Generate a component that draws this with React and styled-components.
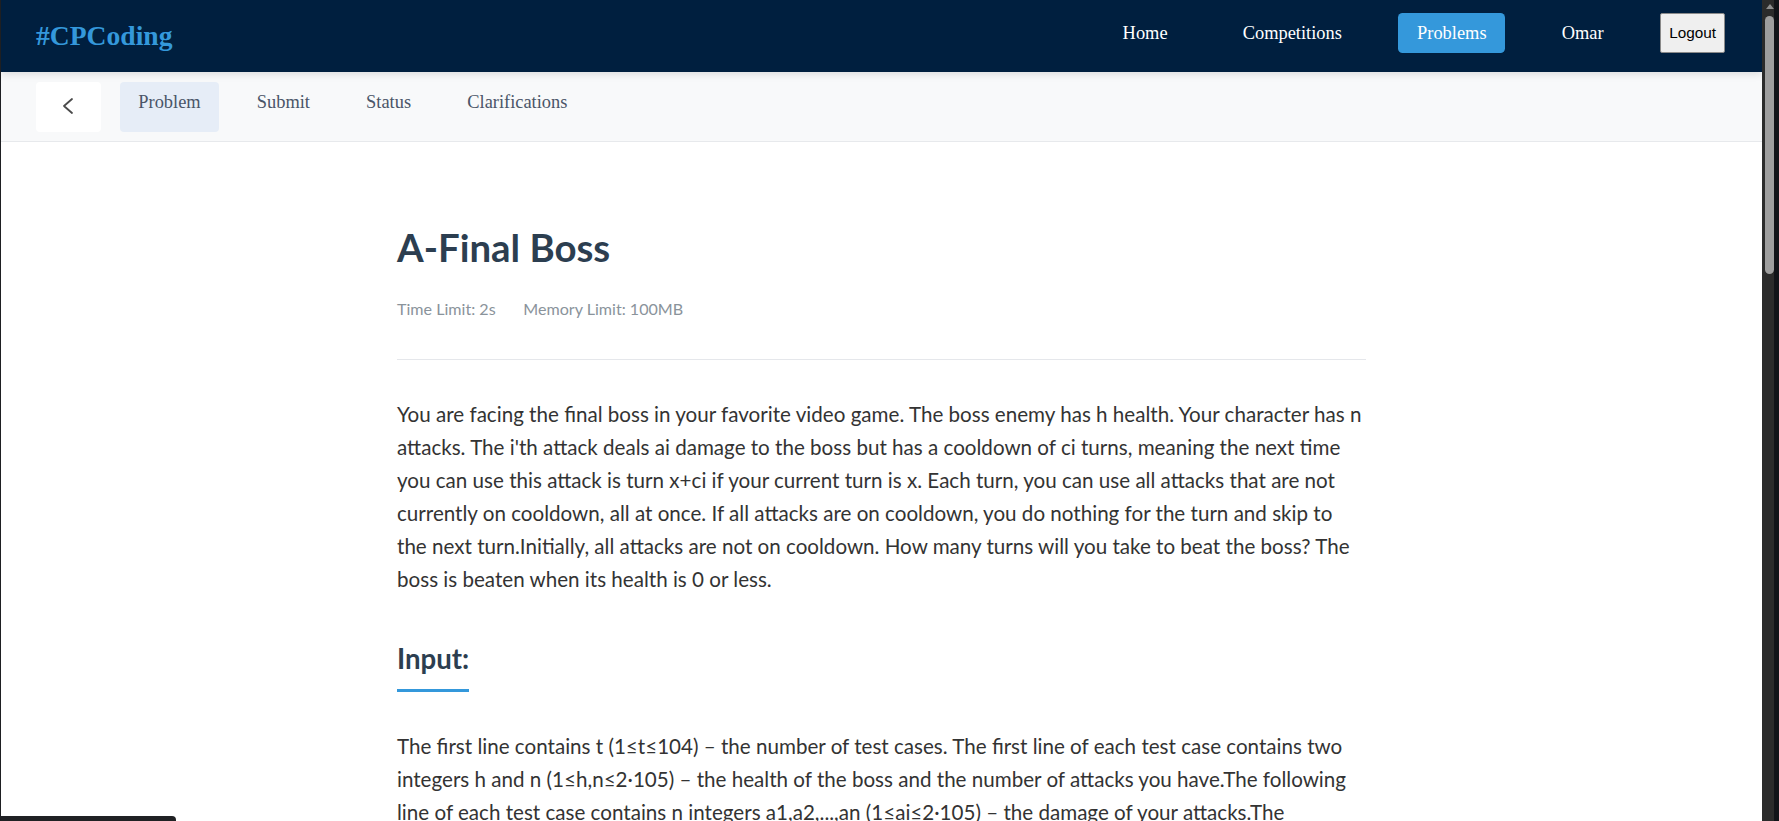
import React from "react";
import styled, { createGlobalStyle } from "styled-components";

const GlobalStyle = createGlobalStyle`
  body {
    margin: 0 17px 0 0;
    background: #ffffff;
    border-left: 1px solid #1e1f22;
  }
`;

const Navbar = styled.header`
  position: relative;
  z-index: 2;
  display: flex;
  align-items: center;
  justify-content: space-between;
  height: 72px;
  padding: 0 37px 6px 35px;
  box-sizing: border-box;
  background: #001f3f;
  box-shadow: 0 2px 8px rgba(0, 0, 0, 0.12);
`;

const Logo = styled.div`
  margin-top: 6px;
  font-family: "Liberation Serif", serif;
  font-weight: 700;
  font-size: 27.6px;
  color: #3498db;
`;

const NavLinks = styled.nav`
  display: flex;
  align-items: center;
  gap: 38px;
`;

const NavLink = styled.a`
  padding: 9.2px 18.6px;
  border-radius: 4.6px;
  font-family: "Liberation Serif", serif;
  font-size: 18.4px;
  line-height: 21px;
  color: #ffffff;
  text-decoration: none;
  background: ${(p) => (p.$active ? "#3498db" : "transparent")};
`;

const LogoutButton = styled.button`
  height: 39.5px;
  padding: 0 8px;
  border: 1px solid #8a8a8a;
  border-radius: 2px;
  background: #efefef;
  font-family: "Liberation Sans", Arial, sans-serif;
  font-size: 15.3px;
  color: #000000;
`;

const SubNav = styled.div`
  display: flex;
  align-items: center;
  gap: 19.4px;
  height: 70px;
  padding: 0 35px;
  box-sizing: border-box;
  background: #f8f9fa;
  border-bottom: 1px solid #e7e9ec;
`;

const BackButton = styled.button`
  display: flex;
  align-items: center;
  justify-content: center;
  width: 64.5px;
  height: 50px;
  padding: 0 0 2px;
  border: none;
  border-radius: 4px;
  background: #ffffff;
  color: #4a4a4a;
`;

const Tab = styled.a`
  box-sizing: border-box;
  height: 50px;
  padding: 10px 18.4px;
  border-radius: 4px;
  font-family: "Liberation Serif", serif;
  font-size: 18.4px;
  color: #4a5568;
  text-decoration: none;
  background: ${(p) => (p.$active ? "#e6edf7" : "transparent")};
`;

const Main = styled.main`
  width: 969px;
  margin: 0 auto;
  padding: 81px 0 120px;
  font-family: Lato, "Liberation Sans", sans-serif;
  color: #333333;
`;

const Header = styled.div`
  padding-bottom: 41px;
  border-bottom: 1px solid #e5e7eb;
`;

const Title = styled.h1`
  margin: 0;
  font-size: 38.4px;
  line-height: 49.7px;
  font-weight: 700;
  color: #2c3e50;
`;

const Meta = styled.div`
  display: flex;
  gap: 27.6px;
  margin-top: 26px;
  font-size: 16.1px;
  line-height: 1.2;
  color: #8a939b;
`;

const Section = styled.section`
  margin-top: 45px;
`;

const Paragraph = styled.p`
  margin: 38px 0 0;
  font-size: 20.6px;
  line-height: 33.1px;
`;

const SectionTitle = styled.h2`
  display: inline-block;
  margin: 0;
  padding-bottom: 14px;
  border-bottom: 3px solid #3498db;
  font-size: 27.6px;
  line-height: 1.2;
  font-weight: 700;
  color: #2c3e50;
`;

const SectionBody = styled(Paragraph)`
  margin-top: 38px;
`;

const Sample = styled.pre`
  margin: 24px 0 0;
  padding: 18px 20px;
  border-radius: 6px;
  background: #f5f7f9;
  font-family: "Liberation Mono", monospace;
  font-size: 16px;
  line-height: 1.5;
  color: #2c3e50;
`;

/* the browser's dark scrollbar, drawn over the right edge */
const ScrollTrack = styled.div`
  position: fixed;
  top: 0;
  right: 0;
  width: 17px;
  height: 100vh;
  background: linear-gradient(to right, #2b2b2b 12px, #111318 12px);
`;

const ScrollArrow = styled.div`
  position: absolute;
  top: 4px;
  left: 4px;
  border-left: 4px solid transparent;
  border-right: 4px solid transparent;
  border-bottom: 5px solid #8e8e8e;
`;

const ScrollThumb = styled.div`
  position: absolute;
  top: 16px;
  left: 3px;
  width: 9px;
  height: 258px;
  border-radius: 5px;
  background: #9e9e9e;
`;

const StatusBubble = styled.div`
  position: fixed;
  left: 1px;
  bottom: 0;
  width: 175px;
  height: 5px;
  border-top-right-radius: 4px;
  background: #202124;
`;

const ChevronLeft = () => (
  <svg width="14" height="18" viewBox="0 0 14 18" fill="none">
    <polyline
      points="11,2 3,9 11,16"
      stroke="currentColor"
      strokeWidth="1.8"
      strokeLinecap="round"
      strokeLinejoin="round"
    />
  </svg>
);

const navItems = ["Home", "Competitions", "Problems", "Omar"];
const tabs = ["Problem", "Submit", "Status", "Clarifications"];

export default function App() {
  return (
    <>
      <GlobalStyle />
      <Navbar>
        <Logo>#CPCoding</Logo>
        <NavLinks>
          {navItems.map((item) => (
            <NavLink key={item} $active={item === "Problems"}>
              {item}
            </NavLink>
          ))}
          <LogoutButton>Logout</LogoutButton>
        </NavLinks>
      </Navbar>
      <SubNav>
        <BackButton aria-label="Back">
          <ChevronLeft />
        </BackButton>
        {tabs.map((tab) => (
          <Tab key={tab} $active={tab === "Problem"}>
            {tab}
          </Tab>
        ))}
      </SubNav>
      <Main>
        <Header>
          <Title>A-Final Boss</Title>
          <Meta>
            <span>Time Limit: 2s</span>
            <span>Memory Limit: 100MB</span>
          </Meta>
        </Header>
        <Paragraph>
          You are facing the final boss in your favorite video game. The boss
          enemy has h health. Your character has n attacks. The i'th attack
          deals ai damage to the boss but has a cooldown of ci turns, meaning
          the next time you can use this attack is turn x+ci if your current
          turn is x. Each turn, you can use all attacks that are not currently
          on cooldown, all at once. If all attacks are on cooldown, you do
          nothing for the turn and skip to the next turn.Initially, all attacks
          are not on cooldown. How many turns will you take to beat the boss?
          The boss is beaten when its health is 0 or less.
        </Paragraph>
        <Section>
          <SectionTitle>Input:</SectionTitle>
          <SectionBody>
            The first line contains t (1≤t≤104) – the number of test cases. The
            first line of each test case contains two integers h and n
            (1≤h,n≤2·105) – the health of the boss and the number of attacks
            you have.The following line of each test case contains n integers
            a1,a2,...,an (1≤ai≤2·105) – the damage of your attacks.The following
            line of each test case contains n integers c1,c2,...,cn
            (1≤ci≤2·105) – the cooldown of your attacks.It is guaranteed that
            the sum of h and n over all test cases does not exceed 2·105.
          </SectionBody>
        </Section>
        <Section>
          <SectionTitle>Output:</SectionTitle>
          <SectionBody>
            For each test case, output an integer, the minimum number of turns
            required to beat the boss.
          </SectionBody>
        </Section>
        <Section>
          <SectionTitle>Example:</SectionTitle>
          <Sample>{`8
3 2
2 1
2 1
5 2
2 1
2 1
50 3
5 6 7
5 6 7`}</Sample>
        </Section>
      </Main>
      <ScrollTrack>
        <ScrollArrow />
        <ScrollThumb />
      </ScrollTrack>
      <StatusBubble />
    </>
  );
}
